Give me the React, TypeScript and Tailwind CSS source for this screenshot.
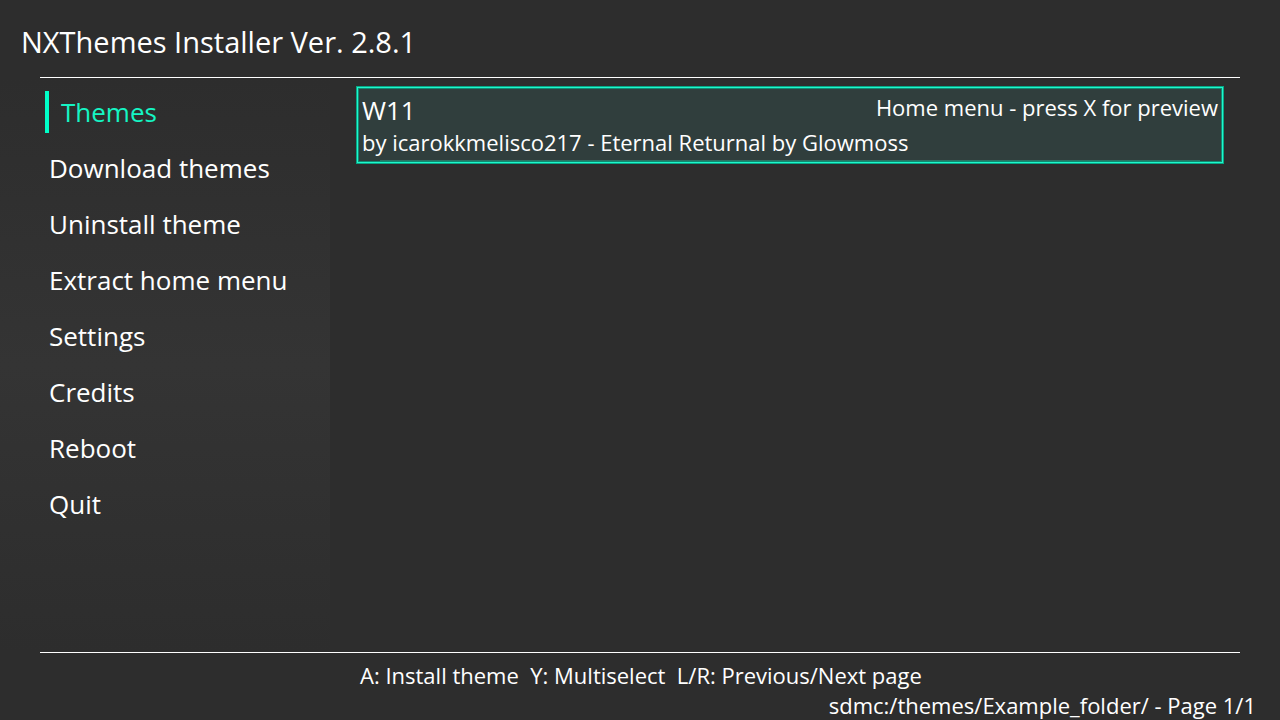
const menu = [
  'Themes',
  'Download themes',
  'Uninstall theme',
  'Extract home menu',
  'Settings',
  'Credits',
  'Reboot',
  'Quit',
];

export default function App() {
  return (
    <div className="flex min-h-screen flex-col bg-[#2d2d2d] font-['Open_Sans','Noto_Sans',sans-serif] text-white">
      <header className="px-[21px] pt-[22px] pb-[15px]">
        <h1 className="text-[29px] leading-10">NXThemes Installer Ver. 2.8.1</h1>
      </header>
      <div className="mx-10 h-px bg-white" />
      <div className="flex flex-1">
        <nav className="w-[330px] shrink-0 bg-linear-to-b from-[#2d2d2d] via-[#343434] to-[#2d2d2d] pt-[13px] pl-[45px]">
          <ul className="flex flex-col gap-[14px]">
            {menu.map((label, i) => (
              <li key={label}>
                <button
                  type="button"
                  aria-current={i === 0 ? 'page' : undefined}
                  className={
                    i === 0
                      ? 'block w-full border-l-4 border-[#00ffc8] pl-3 text-left text-[26px] leading-[42px] text-[#15f5c4]'
                      : 'block w-full pl-1 text-left text-[26px] leading-[42px]'
                  }
                >
                  {label}
                </button>
              </li>
            ))}
          </ul>
        </nav>
        <main className="flex-1 pt-2 pr-14 pl-[26px]">
          <button
            type="button"
            className="block w-full border border-[#08a786] text-left"
          >
            <span className="block border border-[#1ff7cb]">
              <span className="block border border-[#118a72] bg-[#303e3d] px-[3px] pt-px">
                <span className="flex items-start justify-between">
                  <span className="text-[26px] leading-10">W11</span>
                  <span className="text-[22px] leading-[34px]">Home menu - press X for preview</span>
                </span>
                <span className="block text-[22px] leading-6">
                  by icarokkmelisco217 - Eternal Returnal by Glowmoss
                </span>
                <span className="mx-[18px] mt-[6px] block h-px bg-[#2f7366]" />
              </span>
            </span>
          </button>
        </main>
      </div>
      <div className="mx-10 h-px bg-white" />
      <footer className="pt-[7px] pr-6 text-[22px] leading-[30px]">
        <p className="pl-[360px] whitespace-pre">A: Install theme  Y: Multiselect  L/R: Previous/Next page</p>
        <p className="text-right">sdmc:/themes/Example_folder/ - Page 1/1</p>
      </footer>
    </div>
  );
}
